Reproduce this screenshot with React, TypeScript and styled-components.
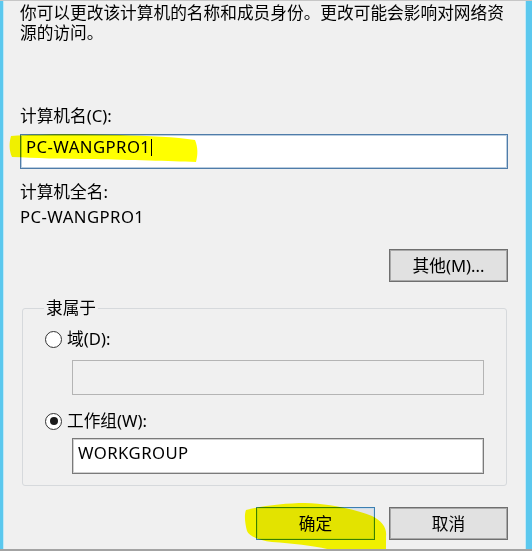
import React from "react";
import styled, { createGlobalStyle } from "styled-components";

const FONT = `"Noto Sans", "Noto Sans CJK SC", sans-serif`;

const Global = createGlobalStyle`
  html, body { margin: 0; padding: 0; background: #f0f0f0; }
  body { font-family: ${FONT}; }
`;

const Frame = styled.div`
  position: relative;
  width: 532px;
  height: 551px;
  box-sizing: border-box;
  border-top: 1px solid #c6c6c6;
  border-bottom: 2px solid #a3a3a3;
  display: flex;
  background: #f0f0f0;
  overflow: hidden;
`;

const LeftEdge = styled.div`
  width: 4px;
  flex: none;
  background: linear-gradient(to right, #5bc8ee 0 3px, #c2e8f6 3px 4px);
`;

const RightEdge = styled.div`
  width: 7px;
  flex: none;
  background: linear-gradient(to right, #c6e9f6 0 1px, #5bc8ee 1px);
`;

const Content = styled.div`
  flex: 1;
  min-width: 0;
  display: flex;
  flex-direction: column;
  padding: 2px 17px 0 16px;
  color: #000;
  font-size: 16.7px;
`;

const Description = styled.p`
  margin: 0;
  line-height: 19.5px;
`;

const Text = styled.div<{ $top: number }>`
  margin-top: ${(p) => p.$top}px;
  line-height: 20px;
  white-space: nowrap;
`;

const Latin = styled.span`
  letter-spacing: 0.45px;
`;

const Field = styled.div<{
  $top: number;
  $height: number;
  $pad: number;
  $tone: "focus" | "normal" | "disabled";
  $inset?: number;
}>`
  box-sizing: border-box;
  margin-top: ${(p) => p.$top}px;
  margin-left: ${(p) => p.$inset ?? 0}px;
  height: ${(p) => p.$height}px;
  padding: ${(p) => p.$pad}px 5px 0 5px;
  line-height: 20px;
  white-space: nowrap;
  background: ${(p) => (p.$tone === "disabled" ? "#f0f0f0" : "#ffffff")};
  border: 1px solid
    ${(p) =>
      p.$tone === "focus" ? "#4f7ca9" : p.$tone === "disabled" ? "#b4b4b4" : "#7a7a7a"};
  box-shadow: ${(p) =>
    p.$tone === "focus"
      ? "inset 0 0 0 1px #b9cde0"
      : p.$tone === "normal"
      ? "inset 0 0 0 1px #d0d0d0"
      : "none"};
`;

const Caret = styled.span`
  display: inline-block;
  width: 1px;
  height: 17px;
  margin-left: 1px;
  background: #000;
  vertical-align: -3px;
`;

const Button = styled.button<{ $primary?: boolean }>`
  box-sizing: border-box;
  width: 119px;
  height: 33px;
  margin: 0;
  padding: 0;
  font-family: ${FONT};
  font-size: 16.7px;
  line-height: 20px;
  color: #000;
  background: ${(p) => (p.$primary ? "#e3e3e3" : "#e1e1e1")};
  border: 1px solid ${(p) => (p.$primary ? "#3c7fb1" : "#6f6f6f")};
  box-shadow: ${(p) =>
    p.$primary ? "inset 0 0 0 1px #c9dcec" : "inset 0 0 0 1px #a9a9a9"};
  display: flex;
  align-items: center;
  justify-content: center;
`;

const OtherButton = styled(Button)`
  margin-top: 22px;
  align-self: flex-end;
`;

const Group = styled.fieldset`
  margin: 16px 1px 0 2px;
  padding: 0 22px 11px 22px;
  min-inline-size: 0;
  border: 1px solid #d6d9dc;
  border-radius: 3px;
  display: flex;
  flex-direction: column;
`;

const Legend = styled.legend`
  margin-left: -1px;
  padding: 0 2px;
  line-height: 20px;
  font-size: 16.7px;
`;

const RadioRow = styled.div<{ $top: number }>`
  margin-top: ${(p) => p.$top}px;
  display: flex;
  align-items: center;
  gap: 5px;
  height: 20px;
  line-height: 20px;
  white-space: nowrap;
`;

const RadioCircle = styled.span<{ $checked?: boolean }>`
  box-sizing: border-box;
  width: 17px;
  height: 17px;
  flex: none;
  border-radius: 50%;
  border: 1.3px solid #333;
  background: #fff;
  display: flex;
  align-items: center;
  justify-content: center;
  &::after {
    content: "";
    width: 8px;
    height: 8px;
    border-radius: 50%;
    background: ${(p) => (p.$checked ? "#1a1a1a" : "transparent")};
  }
`;

const ButtonRow = styled.div`
  margin-top: 21px;
  display: flex;
  justify-content: flex-end;
  gap: 14px;
`;

const Highlight = styled.svg`
  position: absolute;
  left: 0;
  top: -1px;
  width: 532px;
  height: 553px;
  pointer-events: none;
  mix-blend-mode: multiply;
`;

export default function App() {
  return (
    <>
      <Global />
      <Frame>
        <LeftEdge />
        <Content>
          <Description>
            你可以更改该计算机的名称和成员身份。更改可能会影响对网络资源的访问。
          </Description>
          <Text $top={64}>计算机名(C):</Text>
          <Field $top={8} $height={35} $pad={2} $tone="focus">
            <Latin>PC-WANGPRO1</Latin>
            <Caret />
          </Field>
          <Text $top={13}>计算机全名:</Text>
          <Text $top={5}>
            <Latin>PC-WANGPRO1</Latin>
          </Text>
          <OtherButton>其他(M)...</OtherButton>
          <Group>
            <Legend>隶属于</Legend>
            <RadioRow $top={11}>
              <RadioCircle />
              <span>域(D):</span>
            </RadioRow>
            <Field $top={11} $height={35} $pad={4} $tone="disabled" $inset={27} />
            <RadioRow $top={16}>
              <RadioCircle $checked />
              <span>工作组(W):</span>
            </RadioRow>
            <Field $top={7} $height={36} $pad={4} $tone="normal" $inset={27}>
              <Latin>WORKGROUP</Latin>
            </Field>
          </Group>
          <ButtonRow>
            <Button $primary>确定</Button>
            <Button>取消</Button>
          </ButtonRow>
        </Content>
        <RightEdge />
        <Highlight viewBox="0 -1 532 553">
          <path
            fill="#ffff00"
            d="M11,135 C40,133 80,133 120,134 C150,135 175,136 195,139 C198,146 198,154 196,161 C170,160 130,159 95,158 C60,158 35,157 12,156 C9,149 9,142 11,135 Z"
          />
          <path
            fill="#ffff00"
            d="M246,509 C262,505 285,502 305,502 C330,503 355,508 372,515 C382,520 387,527 386,535 L386,552 L340,552 C330,547 300,543 272,541 C258,539 249,535 247,530 C245,522 244,514 246,509 Z"
          />
        </Highlight>
      </Frame>
    </>
  );
}
